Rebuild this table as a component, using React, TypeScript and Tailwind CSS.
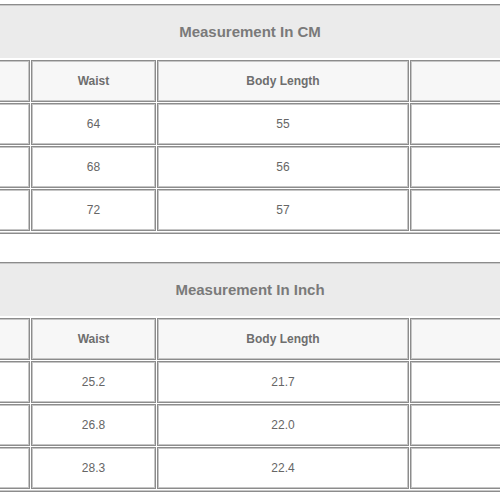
import React from 'react';

const tables = [
  {
    title: 'Measurement In CM',
    rows: [
      ['64', '55'],
      ['68', '56'],
      ['72', '57'],
    ],
  },
  {
    title: 'Measurement In Inch',
    rows: [
      ['25.2', '21.7'],
      ['26.8', '22.0'],
      ['28.3', '22.4'],
    ],
  },
];

function Cell({
  children,
  className = '',
  inner = '',
  head = false,
}: {
  children?: React.ReactNode;
  className?: string;
  inner?: string;
  head?: boolean;
}) {
  return (
    <div className={`h-[42px] border border-[#8c8c8c] ${className}`}>
      <div
        className={`h-full flex items-center justify-center border border-[#c6c6c6] ${
          head ? 'bg-[#f7f7f7] text-[#6e6e6e] font-bold' : 'bg-white text-[#666666]'
        } ${inner}`}
      >
        {children}
      </div>
    </div>
  );
}

function Row({ cells, head = false }: { cells: string[]; head?: boolean }) {
  return (
    <div className="flex gap-px">
      <Cell head={head} className="w-[30px] border-l-0" inner="border-l-0" />
      <Cell head={head} className="w-[125px]">
        {cells[0]}
      </Cell>
      <Cell head={head} className="w-[252px]">
        {cells[1]}
      </Cell>
      <Cell head={head} className="flex-1 border-r-0" inner="border-r-0" />
    </div>
  );
}

function SizeTable({ title, rows }: { title: string; rows: string[][] }) {
  return (
    <div className="border-y border-[#8c8c8c]">
      <div className="border-y border-[#c8c8c8]">
        <div className="h-[52px] bg-[#ebebeb] flex items-center justify-center text-[15px] font-bold text-[#7a7a7a]">
          {title}
        </div>
        <div className="pt-[2px] pb-px flex flex-col gap-px">
          <Row head cells={['Waist', 'Body Length']} />
          {rows.map((r, i) => (
            <Row key={i} cells={r} />
          ))}
        </div>
      </div>
    </div>
  );
}

export default function App() {
  return (
    <div
      className="w-[500px] h-[500px] bg-white overflow-hidden pt-[4px] flex flex-col gap-[28px] text-[12px]"
      style={{ fontFamily: '"Liberation Sans", Arial, sans-serif' }}
    >
      {tables.map((t) => (
        <SizeTable key={t.title} title={t.title} rows={t.rows} />
      ))}
    </div>
  );
}
